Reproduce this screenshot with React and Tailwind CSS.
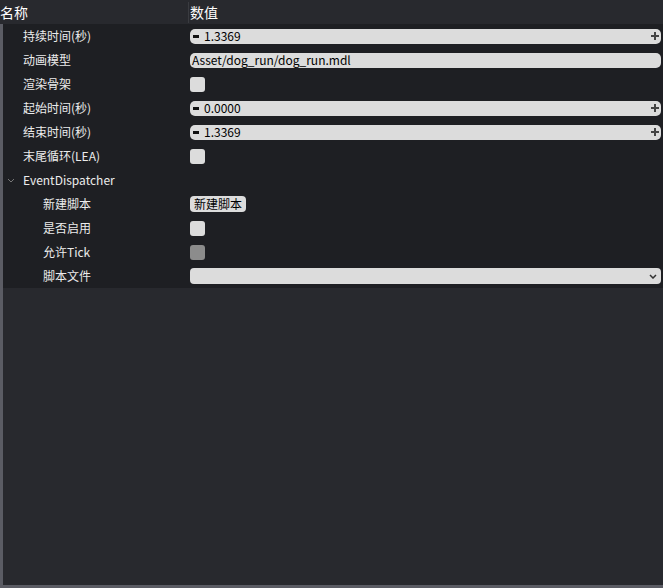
import React from 'react';

const font = { fontFamily: '"Microsoft YaHei", "Noto Sans CJK SC", "Liberation Sans", sans-serif' };

function Spin({ value }) {
  return (
    <div className="flex h-[15px] w-[471px] items-center rounded-[5px] bg-[#dcdcdc] text-[12px] leading-none text-black">
      <span className="ml-[3px] h-[3px] w-[6px] bg-[#111]" />
      <span className="ml-[5px]">{value}</span>
      <span className="relative ml-auto mr-[2px] h-[8px] w-[8px]">
        <span className="absolute left-0 top-[3px] h-[2px] w-[8px] bg-[#444]" />
        <span className="absolute left-[3px] top-0 h-[8px] w-[2px] bg-[#444]" />
      </span>
    </div>
  );
}

function Check({ dim }) {
  return <div className={`h-[15px] w-[15px] rounded-[3px] ${dim ? 'bg-[#8c8c8c]' : 'bg-[#dcdcdc]'}`} />;
}

function Row({ label, indent, children, arrow }) {
  return (
    <div className="flex h-[24px] items-center">
      <div className={`flex w-[187px] items-center text-[12px] text-[#ececec] ${indent === 2 ? 'pl-[40px]' : 'pl-[20px]'}`}>
        {arrow && (
          <svg className="-ml-[16px] mr-[8px]" width="8" height="5" viewBox="0 0 8 5">
            <path d="M1 1l3 3 3-3" fill="none" stroke="#777" strokeWidth="1" />
          </svg>
        )}
        {label}
      </div>
      <div className="flex items-center">{children}</div>
    </div>
  );
}

export default function App() {
  return (
    <div className="flex h-[588px] w-[663px] flex-col bg-[#5b5c64]" style={font}>
      <div className="flex h-[24px] shrink-0 items-center bg-[#28292e] text-[14px] text-white">
        <div className="w-[189px] border-r border-[#3a3b40]">名称</div>
        <div className="pl-[1px]">数值</div>
      </div>
      <div className="ml-[3px] mb-[3px] flex flex-1 flex-col bg-[#28292e]">
        <div className="bg-[#1e1f23]">
          <Row label="持续时间(秒)"><Spin value="1.3369" /></Row>
          <Row label="动画模型">
            <div className="flex h-[15px] w-[471px] items-center rounded-[5px] bg-[#dcdcdc] pl-[2px] text-[12px] text-black">
              Asset/dog_run/dog_run.mdl
            </div>
          </Row>
          <Row label="渲染骨架"><Check /></Row>
          <Row label="起始时间(秒)"><Spin value="0.0000" /></Row>
          <Row label="结束时间(秒)"><Spin value="1.3369" /></Row>
          <Row label="末尾循环(LEA)"><Check /></Row>
          <Row label="EventDispatcher" arrow />
          <Row label="新建脚本" indent={2}>
            <div className="flex h-[16px] items-center rounded-[4px] bg-[#dcdcdc] px-[4px] text-[12px] text-black">新建脚本</div>
          </Row>
          <Row label="是否启用" indent={2}><Check /></Row>
          <Row label="允许Tick" indent={2}><Check dim /></Row>
          <Row label="脚本文件" indent={2}>
            <div className="flex h-[16px] w-[471px] items-center justify-end rounded-[4px] bg-[#dcdcdc] pr-[4px]">
              <svg width="8" height="5" viewBox="0 0 8 5">
                <path d="M1 1l3 3 3-3" fill="none" stroke="#333" strokeWidth="1.5" />
              </svg>
            </div>
          </Row>
        </div>
      </div>
    </div>
  );
}
